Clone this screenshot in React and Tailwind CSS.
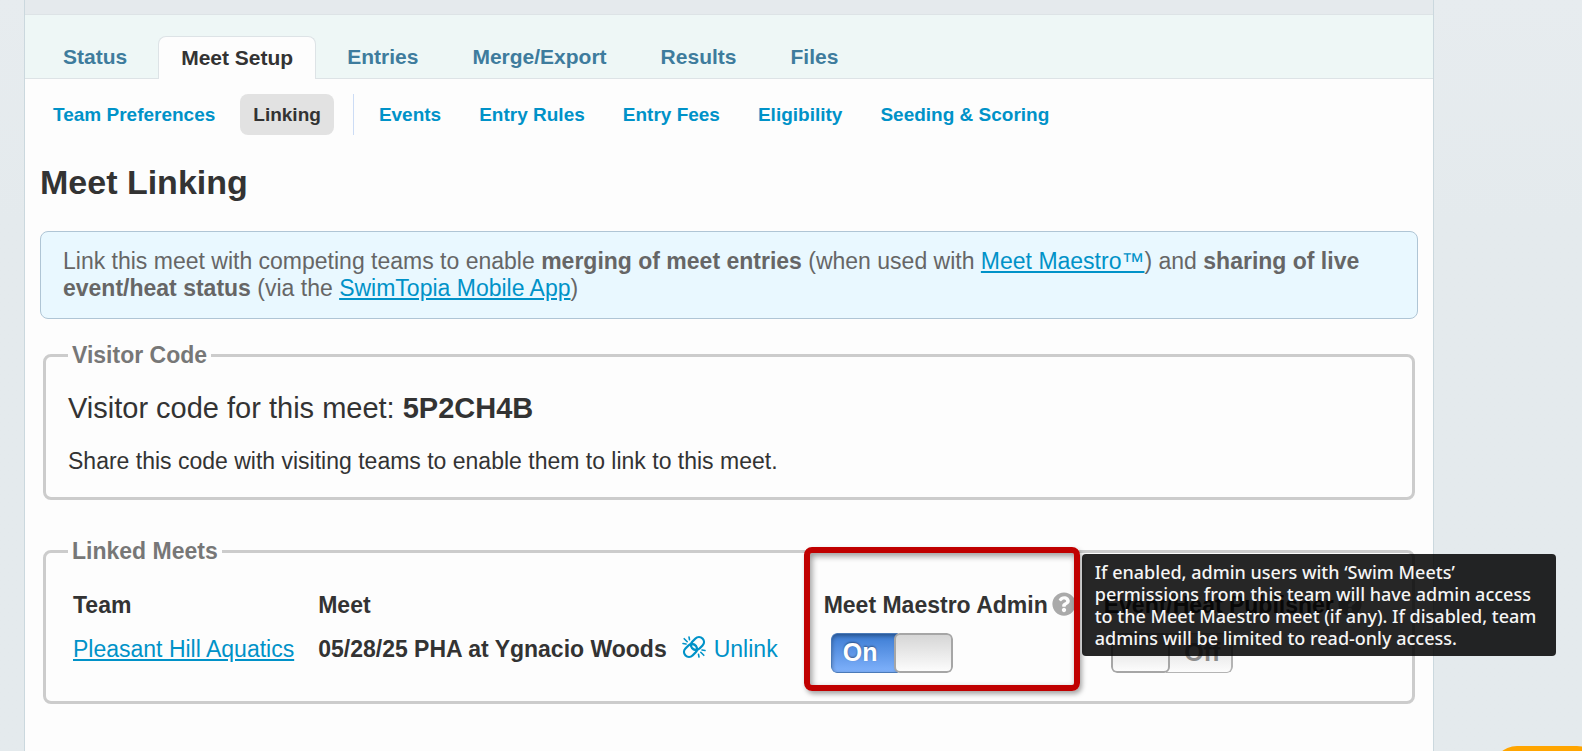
import { useState } from 'react';
import { FaQuestionCircle } from 'react-icons/fa';

const tabs = ['Status', 'Meet Setup', 'Entries', 'Merge/Export', 'Results', 'Files'];
const subTabs = ['Events', 'Entry Rules', 'Entry Fees', 'Eligibility', 'Seeding & Scoring'];

const linkedMeets = [
  {
    id: 1,
    team: 'Pleasant Hill Aquatics',
    meet: '05/28/25 PHA at Ygnacio Woods',
    admin: true,
    publisher: false
  }
];

function UnlinkIcon() {
  return (
    <svg className="w-6 h-6 -mt-1" viewBox="0 0 24 24" fill="none" stroke="currentColor" strokeWidth={2.3} strokeLinecap="round">
      <path d="M10 13a5 5 0 0 0 7.540.540l3-3a5 5 0 0 0-7.070-7.070l-3.200 3.200a5 5 0 0 0-.9 5.200" />
      <path d="M14 11a5 5 0 0 0-7.540-.540l-3 3a5 5 0 0 0 7.070 7.070l3.200-3.200a5 5 0 0 0 .9-5.200" />
      <path strokeWidth={1.600} d="M1 8.500l3 .5M2.200 3.700l3 3M7 2l.5 2.700M23 15.500l-3-.5M21.800 20.300l-3-3M17 22l-.5-2.700" />
    </svg>
  );
}

function Switch({ label, defaultOn }) {
  const [on, setOn] = useState(defaultOn);

  return (
    <label className="relative flex w-[122px] h-10 rounded-md overflow-hidden cursor-pointer text-[25px] leading-9 font-bold">
      <input
        type="checkbox"
        className="sr-only"
        aria-label={label}
        checked={on}
        onChange={() => setOn(!on)}
      />
      {on ? (
        <>
          <span className="flex-1 -mr-1 pr-2 text-center text-white bg-linear-to-b from-[#3b7cd3] to-[#7fb1fb] border border-[#4a7ab8] rounded-l-md shadow-[inset_0_2px_4px_rgba(0,0,0,0.35)] [text-shadow:0_-1px_2px_rgba(0,0,0,0.4)]">
            On
          </span>
          <span className="relative w-[59px] bg-linear-to-b from-[#d6d6d6] to-[#fcfcfc] border-2 border-[#a6a6a6] rounded-md"></span>
        </>
      ) : (
        <>
          <span className="relative w-[59px] bg-linear-to-b from-[#d6d6d6] to-[#fcfcfc] border-2 border-[#a6a6a6] rounded-md"></span>
          <span className="flex-1 -ml-1 pl-2 text-center text-[#8c8c8c] bg-linear-to-b from-[#d6d6d6] to-[#fcfcfc] border-y border-r-2 border-[#b4b4b4] rounded-r-md">
            Off
          </span>
        </>
      )}
    </label>
  );
}

export default function App() {
  const [activeTab, setActiveTab] = useState('Meet Setup');

  return (
    <div className="min-h-screen flex pl-6 pr-[148px] overflow-hidden bg-linear-to-b from-[#e7ecef] to-[#e4eaed] to-30% font-['Liberation_Sans',Arial,sans-serif] text-[#333]">
      <main className="flex-1 border-x border-[#cbd8de] bg-[#fdfdfd]">
        <div className="h-[15px] bg-[#e5eaed] border-b border-[#dde3e6]"></div>

        {/* Main tabs */}
        <nav className="flex items-end gap-2 h-16 pl-[15px] bg-[#eef7f6] border-b border-[#dde3e6] text-[21px] leading-6 font-bold">
          {tabs.map((tab) => (
            <button
              key={tab}
              onClick={() => setActiveTab(tab)}
              className={
                tab === activeTab
                  ? 'h-[43px] -mb-px px-[22px] rounded-t-lg border border-b-0 border-[#dde3e6] bg-[#fdfdfd] text-[#333]'
                  : 'h-[43px] px-[23px] text-[#3e7c9d]'
              }
            >
              {tab}
            </button>
          ))}
        </nav>

        {/* Setup sections */}
        <nav className="flex items-center h-[41px] mt-[15px] pl-[15px] text-[19px] leading-6 font-bold text-[#0092c8]">
          <a href="#team-preferences" className="px-[13px] mr-3">Team Preferences</a>
          <a href="#linking" className="flex items-center h-full px-[13px] rounded-lg bg-[#e2e2e2] text-[#333]">Linking</a>
          <span className="w-px h-full ml-[19px] mr-3 bg-[#ccdcf5]"></span>
          <div className="flex gap-3">
            {subTabs.map((item) => (
              <a key={item} href="#section" className="px-[13px]">{item}</a>
            ))}
          </div>
        </nav>

        <div className="px-[15px]">
          <h1 className="mt-[27px] text-[34px] leading-10 font-bold">Meet Linking</h1>

          <p className="mt-[29px] px-[22px] pt-4 pb-4 rounded-lg border border-[#afc5d5] bg-[#e9f8ff] text-[23px] leading-[27px] text-[#666]">
            Link this meet with competing teams to enable <b>merging of meet entries</b> (when used with{' '}
            <a href="#maestro" className="text-[#0092c8] underline">Meet Maestro™</a>) and <b>sharing of live event/heat status</b> (via the{' '}
            <a href="#mobile" className="text-[#0092c8] underline">SwimTopia Mobile App</a>)
          </p>

          <fieldset className="mt-[23px] mx-[3px] px-[22px] pb-[22px] rounded-lg border-3 border-[#ccc]">
            <legend className="px-1 text-[23px] leading-[27px] font-bold text-[#777]">Visitor Code</legend>
            <p className="mt-[23px] text-[29px] leading-8">
              Visitor code for this meet: <b>5P2CH4B</b>
            </p>
            <p className="mt-6 text-[23px] leading-[27px]">
              Share this code with visiting teams to enable them to link to this meet.
            </p>
          </fieldset>

          <fieldset className="mt-[38px] mx-[3px] px-[22px] pb-7 rounded-lg border-3 border-[#ccc]">
            <legend className="px-1 text-[23px] leading-[27px] font-bold text-[#777]">Linked Meets</legend>
            <table className="mt-[27px] ml-[5px] text-left text-[23px] leading-[27px] whitespace-nowrap">
              <thead>
                <tr>
                  <th className="pr-6">Team</th>
                  <th colSpan={2}>Meet</th>
                  <th className="pr-7">
                    <div className="relative flex items-center gap-1">
                      Meet Maestro Admin
                      <button aria-label="About Meet Maestro Admin" className="relative -mt-1 text-2xl text-[#aaa]">
                        <FaQuestionCircle />
                        <span
                          role="tooltip"
                          className="absolute z-20 left-full -top-[38px] ml-[6px] w-[474px] px-[13px] py-[7px] rounded bg-black/85 text-left text-[18px] leading-[22px] font-medium whitespace-normal text-[#f5f5f5] font-['Noto_Sans',sans-serif]"
                        >
                          If enabled, admin users with ‘Swim Meets’ permissions from this team will have admin access to the Meet
                          Maestro meet (if any). If disabled, team admins will be limited to read-only access.
                        </span>
                      </button>
                      {/* Highlight frame */}
                      <span className="absolute z-10 -left-5 -right-1 -top-[45px] h-36 rounded-lg border-6 border-[#c00000] pointer-events-none shadow-[2px_3px_5px_rgba(0,0,0,0.35),inset_2px_3px_6px_rgba(0,0,0,0.4)]"></span>
                    </div>
                  </th>
                  <th>
                    <div className="flex items-center gap-1">
                      Event/Heat Publisher
                      <button aria-label="About Event/Heat Publisher" className="-mt-1 text-2xl text-[#aaa]">
                        <FaQuestionCircle />
                      </button>
                    </div>
                  </th>
                </tr>
              </thead>
              <tbody>
                {linkedMeets.map((row) => (
                  <tr key={row.id}>
                    <td className="pt-[6px] pr-6">
                      <a href="#team" className="text-[#0092c8] underline">{row.team}</a>
                    </td>
                    <td className="pt-[6px] pr-[15px] font-bold">{row.meet}</td>
                    <td className="pt-[6px] pr-[46px]">
                      <button className="flex items-center gap-2 text-[#0092c8]">
                        <UnlinkIcon />
                        Unlink
                      </button>
                    </td>
                    <td className="pt-[14px] pl-[7px]">
                      <Switch label="Meet Maestro Admin" defaultOn={row.admin} />
                    </td>
                    <td className="pt-[14px] pl-[7px]">
                      <Switch label="Event/Heat Publisher" defaultOn={row.publisher} />
                    </td>
                  </tr>
                ))}
              </tbody>
            </table>
          </fieldset>
        </div>
      </main>

      {/* Help launcher peeking in at the corner */}
      <button aria-label="Help" className="fixed -bottom-[45px] -right-5 w-[110px] h-[50px] rounded-full bg-[#ffa500]"></button>
    </div>
  );
}
